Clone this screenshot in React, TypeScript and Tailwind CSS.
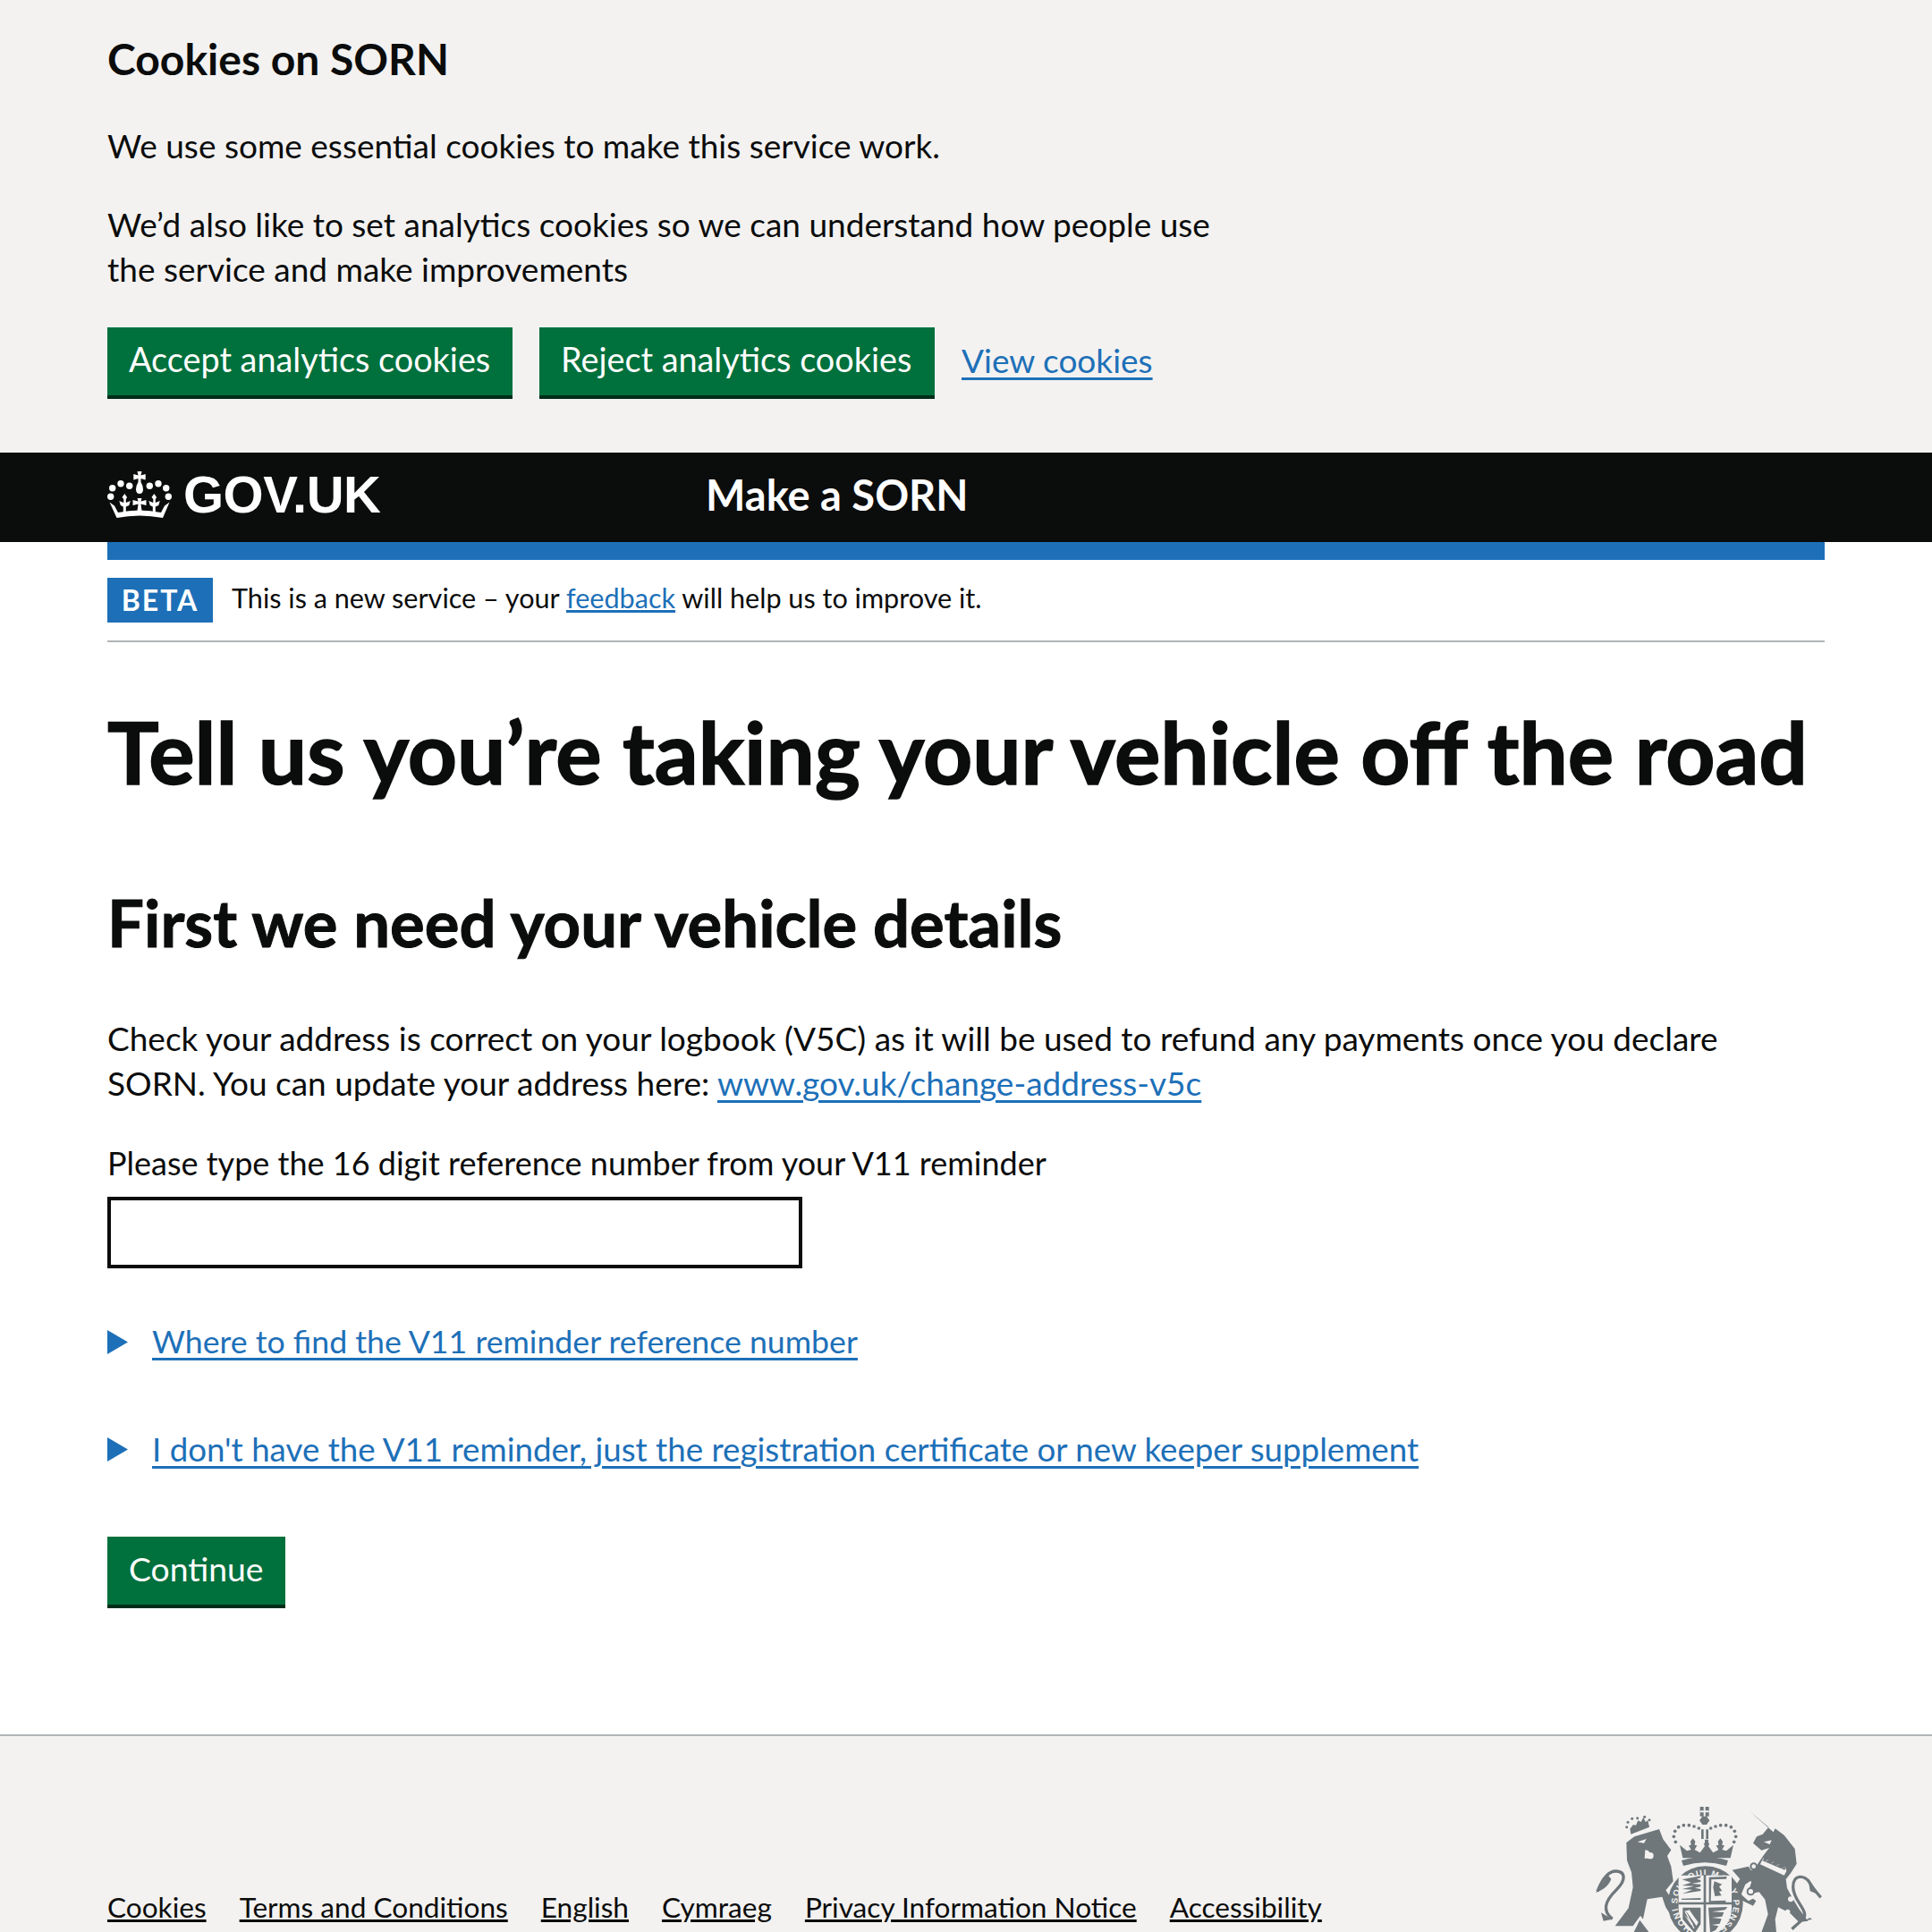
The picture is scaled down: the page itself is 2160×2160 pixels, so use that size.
const Fleur = ({ x }: { x: number }) => (
  <path d={`M${x} 25l2.800 4-1.300 2v4l5-2-1.500 5-3.500 1.500V46h-3v-6.500L${x - 4.500} 38 ${x - 6} 33l5 2v-4l-1.800-2z`} />
)

const Crown = () => (
  <svg viewBox="0 0 72 52" className="w-[72px] h-[52px] shrink-0" fill="#ffffff">
    <path d="M33.500 0h5l-1 4.500 5.200-1.500v6.500L37.500 8v4q2.500 4 2.500 8 0 5-4 5t-4-5q0-4 2.500-8V8l-5.200 1.500V3l5.200 1.500z" />
    <circle cx="5.700" cy="18.700" r="3.700" />
    <circle cx="15" cy="13.700" r="3.700" />
    <circle cx="24.700" cy="16.300" r="3.700" />
    <circle cx="47.300" cy="16.300" r="3.700" />
    <circle cx="57" cy="13.700" r="3.700" />
    <circle cx="65.700" cy="18.700" r="3.700" />
    <circle cx="3.700" cy="28.300" r="3.700" />
    <circle cx="68.300" cy="28.300" r="3.700" />
    <Fleur x={19.300} />
    <Fleur x={52.300} />
    <path d="M33.500 30h5l-1 3.500 6-1.500v6l-6-1.500 1 7.500h-5l1-7.500-6 1.500v-6l6 1.500z" />
    <path d="M10.500 52 2.500 34.500l5.500 4 4 7.500q24-5 48 0l4-7.500 5.500-4L62 52q-26-5-51.500 0z" />
  </svg>
)

// coordinates follow the reference crop at 3x, hence the big viewBox
const Crest = () => (
  <svg viewBox="120 0 780 480" className="w-[260px] h-[160px] shrink-0" fill="#6f777b">
    <defs>
      <path id="garter-ring" d="M453 466A94 94 0 1 1 547 466" fill="none" />
    </defs>
    {/* central crown */}
    <path d="M482 60h30v32h-30zM490 92h14l10 14-10 14h-14l-10-14z" />
    <path d="M494 60h6v32h-6zM482 73h30v6h-30z" fill="#f3f2f1" />
    {[[400, 178], [394, 160], [398, 142], [410, 128], [427, 122], [445, 122], [462, 126], [478, 132], [518, 132], [534, 126], [551, 122], [569, 122], [586, 128], [598, 142], [602, 160], [596, 178]].map(([x, y]) => (
      <circle key={`${x}-${y}`} cx={x} cy={y} r="5.500" />
    ))}
    <path d="M486 136h8v32h-8zM502 136h8v32h-8z" />
    <path d="M424 232l-10-44 24 20 14-4-8-14 8-2-2-12 8-10 8 10-2 12 8 2-8 14 18 10 16-22-4-10 4 0 0-12 12 0 0 12 4 0-4 10 16 22 18-10-8-14 8-2-2-12 8-10 8 10-2 12 8 2-8 14 14 4 24-20-10 44z" />
    <path d="M420 240q78-24 156 0l-6 18q-72-22-144 0z" />
    {/* lion */}
    <path d="M235 180l27-20 83-25 13 34 27 36-13 20 13 35 7 50-25 30 40 60-25 20-30-45-50 5 30 40 15 40h-40l-25-35-25 35h-60l45-60 15-70-5-50-15-40z" />
    <path d="M305 370l50-8 20 60-25 58h-30l-30-40z" fill="#f3f2f1" />
    <path d="M280 440l30 40h-50z" />
    <path d="M188 436c-35-26-25-60 12-96s30-62 2-64-50 32-64 68" fill="none" stroke="#6f777b" strokeWidth="10" />
    <path d="M172 288c-10 22-22 36-40 60 26-10 44-24 52-46zM150 415l38 22-30 6z" />
    <path d="M272 178l30-10-8 14zM298 205q20 0 16 28h-18z" fill="#f3f2f1" />
    <circle cx="315" cy="224" r="11" fill="#f3f2f1" />
    <path d="M250 152l62-24-5-22-8 5-7-16-8 16-10-5-7 16-9-2-11 14z" />
    {[[236, 128], [240, 112], [254, 100], [272, 98], [296, 94], [312, 104]].map(([x, y]) => (
      <circle key={`l${x}`} cx={x} cy={y} r="4.500" />
    ))}
    {/* unicorn */}
    <path d="M648 75l80 70 6-12 30 22 36 46 6 50-20 32-16 20 4 30 16 30 24 40 30 40-30 4-30-30-40-20-10 40 4 44h-50l22-60-10-50-20-25-40 8 14-40-10-30 30-30 20-30 20-26-26 8-28-24 12-22 20-8 20-24z" />
    <path d="M790 470l40-36c16-26-36-60-36-105s40-40 55-15 38 50 38 50" fill="none" stroke="#6f777b" strokeWidth="10" />
    <path d="M846 310l35 45-30-12zM850 432l8 5-26 6z" />
    <path d="M590 272l54-12 26 36-36 24-14 34 24 22 16-8 10 8-10 16-50-24-10-42 16-24z" />
    <path d="M684 252l10-20 6 12 12-8 6 14 12-6 6 14 12-6 6 14 14-4 4 14-8 14-82-38z" fill="#f3f2f1" />
    <path d="M690 240l8-6 4 10 12-8 6 14 12-6 6 14 12-6 6 14 14-4-4 10-76-32z" />
    <circle cx="662" cy="260" r="10" fill="#f3f2f1" stroke="#6f777b" strokeWidth="6" />
    <circle cx="652" cy="344" r="11" fill="#f3f2f1" stroke="#6f777b" strokeWidth="6" />
    <circle cx="786" cy="370" r="9" fill="#f3f2f1" />
    <circle cx="776" cy="412" r="8" fill="#f3f2f1" />
    <circle cx="756" cy="448" r="6" fill="#f3f2f1" />
    <path d="M696 178l26-6-6 14z" fill="#f3f2f1" />
    {/* garter and shield */}
    <circle cx="500" cy="385" r="126" />
    <text fontFamily="Liberation Sans, sans-serif" fontWeight="700" fontSize="29" fill="#f3f2f1">
      <textPath href="#garter-ring" textLength="492">HONI SOIT QUI MAL Y PENSE</textPath>
    </text>
    <path d="M410 290h178v110q0 70-89 104-89-34-89-104z" fill="#f3f2f1" />
    <path d="M494 288h8v216h-8zM410 380h178v8H410z" />
    {/* quarters */}
    <path d="M422 304l62-12v6l-14 4 14 4v6l-30 6 30 2v8l-20 4 20 4v6l-62 10 34-14-34-2 40-10-40-2 30-10zM420 372h64v-6l-64 2z" />
    <path d="M512 296l60-2-2 8-50 2-2 72 50-2v8l-56 0zM530 310l26 10-10 8 10 14-10 2 8 14-22 2-6-30z" />
    <path d="M424 398l60 0v56l-20 30-40-46zM434 408l36 52 6-12-32-40zM430 424l24 34 4-6z" />
    <path d="M432 410l30 58" stroke="#f3f2f1" strokeWidth="4" fill="none" />
    <path d="M444 406l30 44" stroke="#f3f2f1" strokeWidth="4" fill="none" />
    <path d="M510 398l64-2-8 10-44 6 40 2-6 14-34 4 32 4-6 16-26 4 22 4-10 14-18 8z" />
  </svg>
)

const GreenButton = ({ label, width, size }: { label: string; width: string; size: string }) => (
  <button className={`h-[80px] bg-[#00703c] text-white text-left pl-[24px] pb-[4px] border-b-[4px] border-[#002d18] leading-[38px] shrink-0 ${size} ${width}`}>
    {label}
  </button>
)

const DetailsLink = ({ label, size }: { label: string; size: string }) => (
  <div className="flex items-center h-[50px]">
    <svg viewBox="0 0 23 27" className="w-[23px] h-[27px] shrink-0 mr-[27px]" fill="#1d70b8">
      <path d="M0 0l23 13.500L0 27z" />
    </svg>
    <a className={`text-[#1d70b8] underline decoration-[3px] underline-offset-[5px] ${size}`} href="#">
      {label}
    </a>
  </div>
)

export default function App() {
  return (
    <div className="h-[2160px] overflow-hidden bg-white text-[#0b0c0c] font-['Lato',sans-serif] text-[37px] leading-[50px]">
      <div className="bg-[#f3f2f1] h-[506px] px-[120px] pt-[36px]">
        <h2 className="text-[48px] leading-[60px] font-bold">Cookies on SORN</h2>
        <p className="mt-[42px]">We use some essential cookies to make this service work.</p>
        <p className="mt-[38px]">
          We’d also like to set analytics cookies so we can understand how people use
          <br />
          the service and make improvements
        </p>
        <div className="flex items-center gap-[30px] mt-[40px]">
          <GreenButton label="Accept analytics cookies" width="w-[453px]" size="text-[37.8px]" />
          <GreenButton label="Reject analytics cookies" width="w-[442px]" size="text-[37.8px]" />
          <a className="text-[#1d70b8] underline decoration-[3px] underline-offset-[5px] pb-[6px]" href="#">View cookies</a>
        </div>
      </div>

      <div className="bg-[#0b0c0c] h-[100px] px-[120px] flex items-center pb-[6px]">
        <Crown />
        <span className="ml-[13px] w-[584px] font-['Liberation_Sans',sans-serif] font-bold text-[58px] tracking-[-0.5px] text-white">GOV.UK</span>
        <span className="text-[47px] font-bold text-white">Make a SORN</span>
      </div>

      <div className="px-[120px]">
        <div className="h-[20px] bg-[#1d70b8]" />
        <div className="flex items-center h-[92px] border-b-[2px] border-[#b1b4b6]">
          <strong className="bg-[#1d70b8] text-white w-[118px] h-[50px] flex items-center justify-center text-[32px] tracking-[2px] leading-none">BETA</strong>
          <span className="ml-[21px] text-[30.6px] pb-[4px]">
            This is a new service – your <a className="text-[#1d70b8] underline" href="#">feedback</a> will help us to improve it.
          </span>
        </div>

        <h1 className="mt-[62px] text-[96.3px] leading-[120px] font-bold [-webkit-text-stroke:1.5px_#0b0c0c]">Tell us you’re taking your vehicle off the road</h1>
        <h2 className="mt-[86px] text-[72.5px] leading-[90px] font-bold [-webkit-text-stroke:1px_#0b0c0c]">First we need your vehicle details</h2>

        <p className="mt-[60px]">
          Check your address is correct on your logbook (V5C) as it will be used to refund any payments once you declare
          <br />
          SORN. You can update your address here: <a className="text-[#1d70b8] underline decoration-[3px] underline-offset-[5px]" href="#">www.gov.uk/change-address-v5c</a>
        </p>

        <label className="block mt-[39px] text-[36px]">Please type the 16 digit reference number from your V11 reminder</label>
        <input className="block mt-[13px] w-[777px] h-[80px] border-[4px] border-[#0b0c0c] bg-white" />

        <div className="mt-[57px]"><DetailsLink size="text-[35.7px]" label="Where to find the V11 reminder reference number" /></div>
        <div className="mt-[70px]"><DetailsLink size="text-[36.7px]" label="I don't have the V11 reminder, just the registration certificate or new keeper supplement" /></div>

        <div className="mt-[73px]"><GreenButton label="Continue" width="w-[199px]" size="text-[37.3px]" /></div>
      </div>

      <div className="mt-[141px] border-t-[2px] border-[#b1b4b6] bg-[#f3f2f1] h-[240px] px-[120px] pt-[59px] flex justify-between items-start">
        <div className="mt-[112px] flex gap-[37px] text-[31.6px] leading-[40px]">
          {['Cookies', 'Terms and Conditions', 'English', 'Cymraeg', 'Privacy Information Notice', 'Accessibility'].map((item) => (
            <a key={item} className="underline" href="#">{item}</a>
          ))}
        </div>
        <Crest />
      </div>
    </div>
  )
}
